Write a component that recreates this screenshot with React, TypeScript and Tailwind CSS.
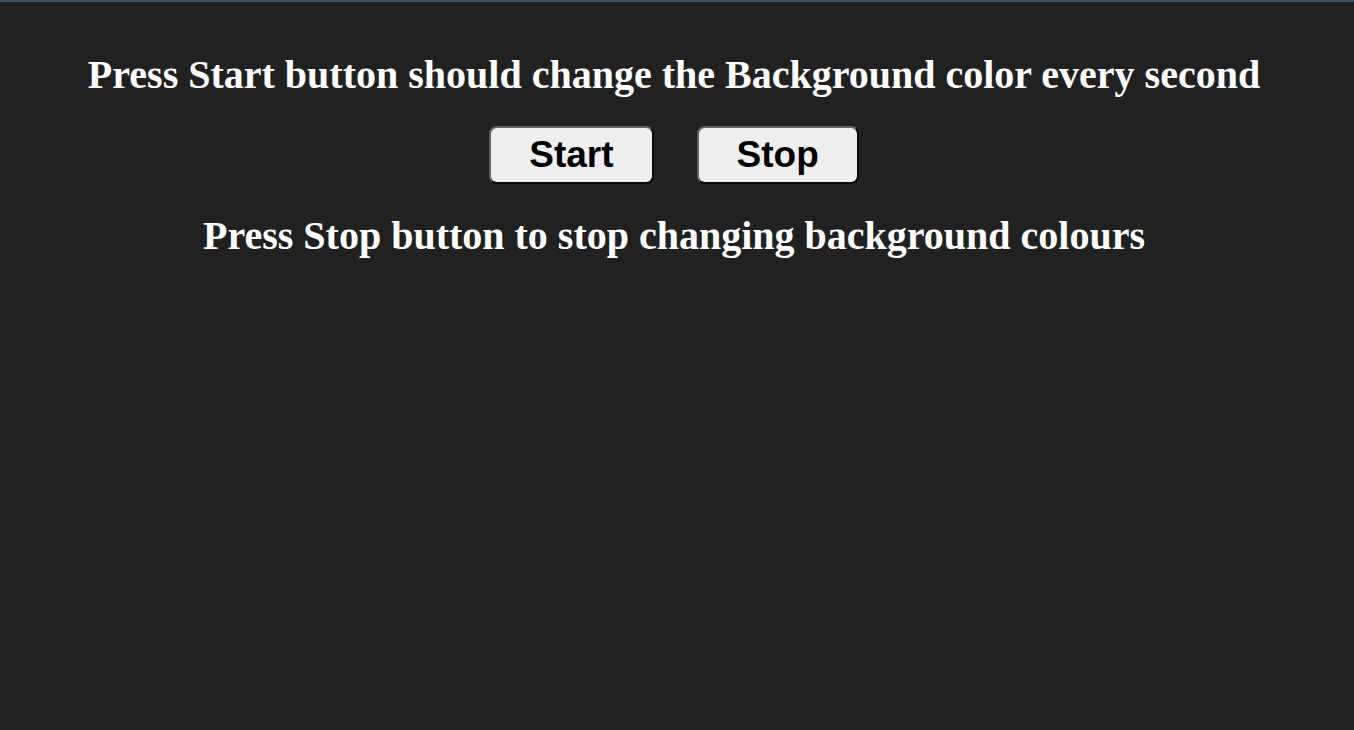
import React, { useEffect, useState } from 'react';

const App: React.FC = () => {
    const [running, setRunning] = useState(false);
    const [bg, setBg] = useState<string | null>(null);

    useEffect(() => {
        if (!running) return;
        const id = setInterval(() => {
            const c = '#' + Math.floor(Math.random() * 0xffffff).toString(16).padStart(6, '0');
            setBg(c);
        }, 1000);
        return () => clearInterval(id);
    }, [running]);

    // outset-looking border: light top/left, dark bottom/right
    const btnClass = "px-[38px] py-[6px] bg-[#efefef] text-black text-[37px] font-bold leading-[42px] rounded-[8px] border-2 border-t-[#646464] border-l-[#646464] border-b-[#0c0c0c] border-r-[#0c0c0c] [font-family:'Liberation_Sans',Arial,sans-serif]";

    return (
        <div
            className="min-h-[730px] w-full pr-[6px] bg-[#212121] border-t-2 border-[#3a4f5d] text-white [font-family:'Liberation_Serif','Times_New_Roman',serif]"
            style={bg ? { backgroundColor: bg } : undefined}
        >
            <h1 className="pt-[50px] text-center text-[40px] font-bold leading-[46px]">
                Press Start button should change the Background color every second
            </h1>
            <div className="mt-[28px] flex justify-center gap-[43px]">
                <button type="button" className={btnClass} onClick={() => setRunning(true)}>Start</button>
                <button type="button" className={btnClass} onClick={() => setRunning(false)}>Stop</button>
            </div>
            <h2 className="mt-[29px] text-center text-[40px] font-bold leading-[46px]">
                Press Stop button to stop changing background colours
            </h2>
        </div>
    );
};

export default App;
